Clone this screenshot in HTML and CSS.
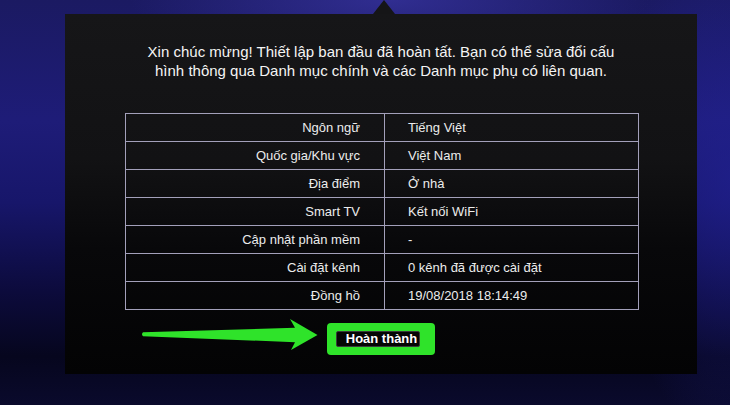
FILE: index.html
```html
<!DOCTYPE html>
<html lang="vi">
<head>
<meta charset="utf-8">
<title>Thiết lập hoàn tất</title>
<link rel="stylesheet" href="styles.css">
</head>
<body>
<div class="screen">
  <div class="panel">
    <span class="notch"></span>
    <p class="message">Xin chúc mừng! Thiết lập ban đầu đã hoàn tất. Bạn có thể sửa đổi cấu<br>hình thông qua Danh mục chính và các Danh mục phụ có liên quan.</p>
    <div class="summary">
      <div class="label">Ngôn ngữ</div><div class="value">Tiếng Việt</div>
      <div class="label">Quốc gia/Khu vực</div><div class="value">Việt Nam</div>
      <div class="label">Địa điểm</div><div class="value">Ở nhà</div>
      <div class="label">Smart TV</div><div class="value">Kết nối WiFi</div>
      <div class="label">Cập nhật phần mềm</div><div class="value">-</div>
      <div class="label">Cài đặt kênh</div><div class="value">0 kênh đã được cài đặt</div>
      <div class="label">Đồng hồ</div><div class="value">19/08/2018 18:14:49</div>
    </div>
    <div class="actions">
      <div class="highlight"><span class="done-btn">Hoàn thành</span></div>
    </div>
  </div>
  <svg class="arrow" width="180" height="36" viewBox="0 0 180 36" aria-hidden="true">
    <path d="M3 15.3 L155 10.8 L150 2 L177.5 18 L151 33 L155 25.2 L3 19.2 Q1 17.3 3 15.3 Z" fill="#2fe32a"/>
  </svg>
</div>
</body>
</html>
```
FILE: styles.css
```css
html, body {
  margin: 0;
  padding: 0;
}
body {
  width: 730px;
  height: 405px;
  overflow: hidden;
  font-family: "Liberation Sans", Arial, sans-serif;
}
.screen {
  position: relative;
  width: 730px;
  height: 405px;
  padding-top: 14px;
  box-sizing: border-box;
  background:
    radial-gradient(ellipse 260px 60px at 390px 0px, rgba(60, 56, 170, 0.65), rgba(60, 56, 170, 0) 100%),
    radial-gradient(ellipse 120px 260px at 730px 180px, rgba(34, 34, 150, 0.6), rgba(34, 34, 150, 0) 100%),
    linear-gradient(to bottom, #1b1a62 0%, #1e1c78 30%, #17166a 50%, #0c0b3c 72%, #06061e 88%, #0a0a2c 100%);
}
.panel {
  position: relative;
  margin-left: 65px;
  width: 632px;
  height: 360px;
  padding-top: 28px;
  box-sizing: border-box;
  background: linear-gradient(to bottom, #161618 0%, #121214 40%, #08080a 65%, #030304 100%);
}
.notch {
  position: absolute;
  left: 308px;
  top: -14px;
  width: 0;
  height: 0;
  border-left: 11px solid transparent;
  border-right: 11px solid transparent;
  border-bottom: 14px solid #151517;
}
.message {
  margin: 0;
  text-align: center;
  color: #f4f4f4;
  font-size: 15px;
  line-height: 19px;
}
.summary {
  display: grid;
  grid-template-columns: 259px 1fr;
  width: 514px;
  margin: 33px 0 0 60px;
  border-top: 1px solid #a3a0ba;
  border-left: 1px solid #a3a0ba;
  box-sizing: border-box;
}
.label, .value {
  height: 27px;
  line-height: 27px;
  border-right: 1px solid #a3a0ba;
  border-bottom: 1px solid #a3a0ba;
  color: #ececec;
  font-size: 13px;
  white-space: nowrap;
}
.label {
  text-align: right;
  padding-right: 24px;
}
.value {
  padding-left: 23px;
}
.actions {
  display: flex;
  justify-content: center;
  margin-top: 13px;
}
.highlight {
  background: #2fe32a;
  border-radius: 4px;
  padding: 8px 15px 8px 9px;
}
.done-btn {
  display: block;
  background: #050505;
  border: 1px solid #3a3a3a;
  border-radius: 2px;
  color: #ffffff;
  font-weight: bold;
  font-size: 13px;
  line-height: 14px;
  padding: 0 2px 0 9px;
}
.arrow {
  position: absolute;
  left: 140px;
  top: 317px;
}
```
